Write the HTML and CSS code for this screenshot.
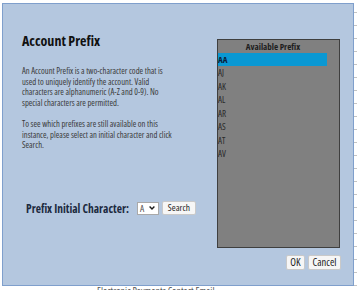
FILE: index.html
```html
<!DOCTYPE html>
<html>
<head>
<meta charset="utf-8">
<link rel="stylesheet" href="styles.css">
</head>
<body>
<div class="dialog">
  <div class="main">
    <div class="left">
      <h1 class="title">Account Prefix</h1>
      <p class="desc">An Account Prefix is a two-character code that is<br>used to uniquely identify the account. Valid<br>characters are alphanumeric (A-Z and 0-9). No<br>special characters are permitted.</p>
      <p class="desc desc-2">To see which prefixes are still available on this<br>instance, please select an initial character and click<br>Search.</p>
      <div class="search-row">
        <span class="label">Prefix Initial Character:</span>
        <div class="select"><span class="select-value">A</span><svg class="chev" width="6" height="4" viewBox="0 0 6 4"><polyline points="0.6,0.6 3,3 5.4,0.6" fill="none" stroke="#1a1a1a" stroke-width="1.4"/></svg></div>
        <button class="btn btn-search">Search</button>
      </div>
    </div>
    <div class="listbox">
      <div class="list-head">Available Prefix</div>
      <ul class="list">
        <li class="item selected">AA</li>
        <li class="item">AJ</li>
        <li class="item">AK</li>
        <li class="item">AL</li>
        <li class="item">AR</li>
        <li class="item">AS</li>
        <li class="item">AT</li>
        <li class="item">AV</li>
      </ul>
    </div>
  </div>
  <div class="footer">
    <button class="btn btn-foot">OK</button>
    <button class="btn btn-foot">Cancel</button>
  </div>
</div>
<div class="bg-bottom">Electronic Payments Contact Email</div>
</body>
</html>
```

FILE: styles.css
```css
html, body {
  margin: 0;
  padding: 0;
}
body {
  width: 357px;
  height: 290px;
  overflow: hidden;
  background-color: #ffffff;
  background-image: repeating-linear-gradient(to bottom, transparent 0 12px, #c4c4c4 12px 13px);
  background-size: 3px 100%;
  background-position: right top;
  background-repeat: no-repeat;
  font-family: "Open Sans", "Liberation Sans", Arial, sans-serif;
  font-stretch: 75%;
}
.dialog {
  box-sizing: border-box;
  margin: 3px 0 0 2px;
  width: 352px;
  height: 283px;
  border: 1px solid #7f9fcc;
  background: #b4c7df;
  display: flex;
  flex-direction: column;
}
.main {
  display: flex;
}
.left {
  width: 195px;
  padding: 28px 0 0 19px;
  flex: none;
}
.title {
  margin: 0;
  font-size: 14px;
  line-height: 17px;
  font-weight: bold;
  color: #111111;
}
.desc {
  margin: 17px 0 0 0;
  font-size: 8.6px;
  line-height: 10.5px;
  color: #3a3a3a;
  white-space: nowrap;
}
.desc-2 {
  margin-top: 11px;
}
.search-row {
  display: flex;
  align-items: center;
  margin-top: 50px;
  padding-left: 4px;
  height: 15px;
  white-space: nowrap;
}
.label {
  font-size: 11.5px;
  font-weight: bold;
  color: #1c2a40;
  margin-right: 8px;
}
.select {
  box-sizing: border-box;
  width: 22px;
  height: 13px;
  background: #ffffff;
  border: 1px solid #a9a9a9;
  display: flex;
  align-items: center;
  padding-left: 2px;
  margin-right: 3px;
  flex: none;
}
.select-value {
  font-size: 9.5px;
  color: #555555;
  margin-right: 5px;
  line-height: 11px;
}
.chev {
  display: block;
}
.btn {
  box-sizing: border-box;
  font-family: inherit;
  font-stretch: inherit;
  background: #f6f6f6;
  border: 1px solid #c9c9c9;
  border-radius: 2px;
  color: #1e1e1e;
  padding: 0;
  margin: 0;
  flex: none;
}
.btn-search {
  width: 34px;
  height: 14px;
  font-size: 9.5px;
  line-height: 12px;
}
.listbox {
  box-sizing: border-box;
  margin-top: 35px;
  width: 123px;
  height: 209px;
  background: #808080;
  border: 1px solid #3f3f3f;
  flex: none;
}
.list-head {
  width: 110px;
  text-align: center;
  font-size: 9px;
  font-weight: bold;
  line-height: 12px;
  padding-top: 1px;
  color: #1e1e1e;
}
.list {
  list-style: none;
  margin: 0;
  padding: 0;
}
.item {
  width: 109px;
  height: 13.5px;
  line-height: 13.5px;
  font-size: 9px;
  color: #2a2a2a;
}
.item.selected {
  background: #0a98d3;
  color: #0b1f3c;
  font-weight: bold;
  height: 13px;
  line-height: 13px;
}
.footer {
  display: flex;
  justify-content: flex-end;
  gap: 3px;
  margin-top: 7px;
  padding-right: 12px;
}
.btn-foot {
  height: 15px;
  font-size: 10.5px;
  line-height: 13px;
  padding: 0 1px;
  color: #1a1a1a;
}
.btn-foot:first-child {
  width: 19px;
}
.btn-foot:last-child {
  width: 33px;
}
.bg-bottom {
  padding-left: 97px;
  font-size: 10px;
  line-height: 10px;
  color: #555555;
  white-space: nowrap;
}
```
